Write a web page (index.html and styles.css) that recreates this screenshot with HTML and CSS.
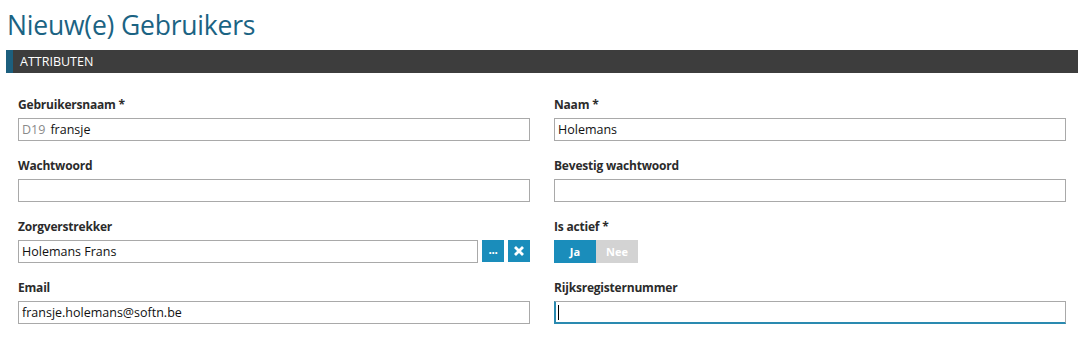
FILE: index.html
```html
<!DOCTYPE html>
<html lang="nl">
<head>
  <meta charset="UTF-8" />
  <title>Nieuw(e) Gebruikers</title>
  <link rel="stylesheet" href="styles.css">
</head>
<body>
  <h1 class="page-title">Nieuw(e) Gebruikers</h1>
  <div class="section-bar">ATTRIBUTEN</div>

  <div class="form-grid">
    <div class="field">
      <label>Gebruikersnaam *</label>
      <div class="box prefixed">
        <span class="prefix">D19</span>
        <input type="text" value="fransje">
      </div>
    </div>
    <div class="field">
      <label>Naam *</label>
      <input class="box" type="text" value="Holemans">
    </div>

    <div class="field">
      <label>Wachtwoord</label>
      <input class="box" type="password">
    </div>
    <div class="field">
      <label>Bevestig wachtwoord</label>
      <input class="box" type="password">
    </div>

    <div class="field">
      <label>Zorgverstrekker</label>
      <div class="lookup">
        <input class="box" type="text" value="Holemans Frans">
        <button class="icon-btn dots">&middot;&middot;&middot;</button>
        <button class="icon-btn">
          <svg width="12" height="12" viewBox="0 0 12 12"><path d="M2 2 L10 10 M10 2 L2 10" stroke="#fff" stroke-width="2.8"/></svg>
        </button>
      </div>
    </div>
    <div class="field">
      <label>Is actief *</label>
      <div class="toggle">
        <span class="on">Ja</span>
        <span class="off">Nee</span>
      </div>
    </div>

    <div class="field">
      <label>Email</label>
      <input class="box" type="text" value="fransje.holemans@softn.be">
    </div>
    <div class="field">
      <label>Rijksregisternummer</label>
      <div class="focus-wrap">
        <input class="box focused" type="text">
        <span class="caret"></span>
      </div>
    </div>
  </div>
</body>
</html>
```

FILE: styles.css
```css
body {
  margin: 0;
  font-family: "Open Sans", "Noto Sans", sans-serif;
  font-size: 12px;
  color: #222;
  background: #fff;
}
.page-title {
  margin: 0;
  padding: 7px 0 0 7px;
  height: 50px;
  box-sizing: border-box;
  font-size: 26.5px;
  font-weight: normal;
  line-height: 36px;
  color: #1b6383;
  letter-spacing: -0.2px;
}
.section-bar {
  margin: 0 8px 0 6px;
  height: 23px;
  line-height: 23px;
  background: #3d3d3d;
  border-left: 7px solid #1c5f7e;
  padding-left: 7px;
  color: #fff;
  font-size: 12.5px;
}
.form-grid {
  display: grid;
  grid-template-columns: 512px 512px;
  column-gap: 24px;
  row-gap: 17px;
  padding: 24px 0 0 18px;
}
.field label {
  display: block;
  font-weight: bold;
  font-size: 12px;
  line-height: 16px;
  margin-bottom: 5px;
  color: #2b2b2b;
  letter-spacing: -0.2px;
}
.box {
  display: block;
  box-sizing: border-box;
  width: 100%;
  height: 23px;
  border: 1px solid #a9a9a9;
  padding: 0 3px;
  font-family: inherit;
  font-size: 12.5px;
  color: #111;
  background: #fff;
  outline: none;
}
.prefixed {
  display: flex;
  align-items: center;
}
.prefixed .prefix {
  color: #8a8a8a;
  margin-right: 5px;
}
.prefixed input {
  border: none;
  padding: 0;
  flex: 1;
  font-family: inherit;
  font-size: 12.5px;
  color: #111;
  outline: none;
}
.lookup {
  display: flex;
  gap: 4px;
}
.lookup .box {
  width: 460px;
}
.icon-btn {
  width: 22px;
  height: 22px;
  border: none;
  padding: 0;
  background: #1a8dbb;
  color: #fff;
  font-weight: bold;
  font-size: 12px;
  display: flex;
  align-items: center;
  justify-content: center;
  cursor: pointer;
}
.icon-btn.dots {
  letter-spacing: -1px;
  padding-top: 3px;
}
.toggle {
  display: flex;
  height: 23px;
}
.toggle span {
  width: 42px;
  line-height: 23px;
  text-align: center;
  font-weight: bold;
  font-size: 11px;
  color: #fff;
}
.toggle .on { background: #1a8dbb; }
.toggle .off { background: #d3d3d3; }
.focus-wrap {
  position: relative;
}
.focused {
  border-left-color: #2a8ab0;
  border-bottom-color: #2a8ab0;
  border-left-width: 2px;
  border-bottom-width: 2px;
}
.caret {
  position: absolute;
  left: 4px;
  top: 4px;
  width: 1px;
  height: 15px;
  background: #000;
}
```
